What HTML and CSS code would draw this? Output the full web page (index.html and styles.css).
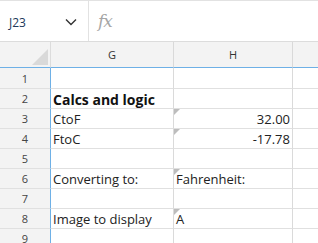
FILE: index.html
```html
<!DOCTYPE html>
<html>
<head>
<meta charset="utf-8">
<link rel="stylesheet" href="styles.css">
</head>
<body>
<div class="fbar">
  <div class="namebox">
    <span class="ref">J23</span>
    <svg class="chev" width="12" height="8" viewBox="0 0 12 8"><path d="M1 1.5 L6 6.5 L11 1.5" fill="none" stroke="#333" stroke-width="1.4"/></svg>
  </div>
  <div class="fx">fx</div>
</div>
<div class="sheet">
  <div class="corner"><span class="ctri"></span></div>
  <div class="colh">G</div>
  <div class="colh">H</div>
  <div class="colh rest"></div>

  <div class="rowh r1">1</div><div class="c r1"></div><div class="c r1"></div><div class="c r1 rest"></div>
  <div class="rowh">2</div><div class="c bold">Calcs and logic</div><div class="c"></div><div class="c rest"></div>
  <div class="rowh">3</div><div class="c">CtoF</div><div class="c num mark">32.00</div><div class="c rest"></div>
  <div class="rowh">4</div><div class="c">FtoC</div><div class="c num mark">-17.78</div><div class="c rest"></div>
  <div class="rowh">5</div><div class="c"></div><div class="c"></div><div class="c rest"></div>
  <div class="rowh">6</div><div class="c">Converting to:</div><div class="c mark">Fahrenheit:</div><div class="c rest"></div>
  <div class="rowh">7</div><div class="c"></div><div class="c"></div><div class="c rest"></div>
  <div class="rowh">8</div><div class="c">Image to display</div><div class="c mark">A</div><div class="c rest"></div>
  <div class="rowh">9</div><div class="c"></div><div class="c"></div><div class="c rest"></div>
</div>
</body>
</html>
```
FILE: styles.css
```css
html, body {
  margin: 0;
  padding: 0;
  background: #fff;
  overflow: hidden;
}
body {
  font-family: "Open Sans", "Noto Sans", sans-serif;
  color: #222;
  width: 318px;
  height: 243px;
}
.fbar {
  display: flex;
  height: 40px;
  border-top: 1px solid #e2e2e2;
  border-bottom: 1px solid #dcdcdc;
}
.namebox {
  width: 89px;
  border-right: 1px solid #e2e2e2;
  display: flex;
  align-items: center;
  justify-content: space-between;
  padding: 0 11px 0 9px;
  box-sizing: border-box;
}
.ref {
  font-size: 12px;
  color: #20385a;
  margin-top: 2px;
}
.chev {
  margin-top: 2px;
}
.fx {
  font-family: "DejaVu Serif", serif;
  font-style: italic;
  font-size: 17px;
  color: #a6a6a6;
  padding-left: 9px;
  line-height: 40px;
  letter-spacing: -1px;
}
.sheet {
  display: grid;
  grid-template-columns: 51px 123px 119px 25px;
  grid-template-rows: 26px 21px repeat(8, 20px);
}
.corner, .colh {
  background: #f3f3f3;
  border-bottom: 1px solid #6eb0e6;
  border-right: 1px solid #d9d9d9;
  font-size: 11px;
  color: #333;
  display: flex;
  align-items: center;
  justify-content: center;
}
.corner {
  position: relative;
  border-right: 1px solid #dcdcdc;
}
.ctri {
  position: absolute;
  right: 2px;
  bottom: 2px;
  width: 0;
  height: 0;
  border-left: 16px solid transparent;
  border-bottom: 16px solid #d9d9d9;
}
.rest {
  border-right: none;
}
.rowh {
  background: #f3f3f3;
  border-right: 1px solid #6eb0e6;
  border-bottom: 1px solid #e0e0e0;
  font-size: 11px;
  color: #444;
  display: flex;
  align-items: center;
  justify-content: center;
}
.c {
  border-right: 1px solid #dadada;
  border-bottom: 1px solid #e0e0e0;
  font-size: 13px;
  color: #222;
  display: flex;
  align-items: center;
  padding: 1px 2px 0 2px;
  white-space: nowrap;
  position: relative;
}
.c.rest {
  border-right: none;
}
.bold {
  font-weight: 700;
  font-size: 14px;
  color: #111;
}
.num {
  justify-content: flex-end;
}
.mark::before {
  content: "";
  position: absolute;
  left: 0;
  top: 0;
  width: 0;
  height: 0;
  border-top: 6px solid #bdbdbd;
  border-right: 6px solid transparent;
}
```
